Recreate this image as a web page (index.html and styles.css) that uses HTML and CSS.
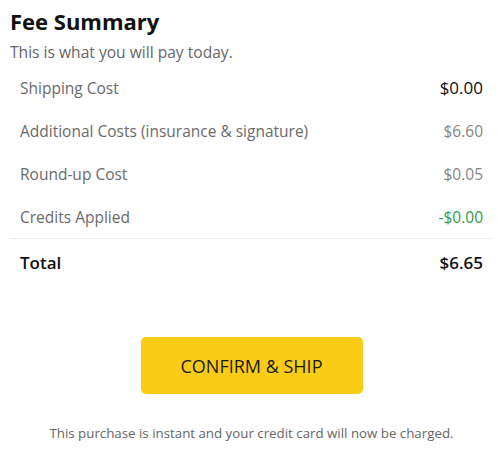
FILE: index.html
```html
<!DOCTYPE html>
<html>
<head>
<meta charset="utf-8">
<link rel="stylesheet" href="styles.css">
</head>
<body>
<div class="summary">
  <h1 class="title">Fee Summary</h1>
  <p class="subtitle">This is what you will pay today.</p>
  <div class="rows">
    <div class="row"><span class="label">Shipping Cost</span><span class="value strong">$0.00</span></div>
    <div class="row"><span class="label">Additional Costs (insurance &amp; signature)</span><span class="value">$6.60</span></div>
    <div class="row"><span class="label">Round-up Cost</span><span class="value">$0.05</span></div>
    <div class="row"><span class="label">Credits Applied</span><span class="value credit">-$0.00</span></div>
  </div>
  <div class="row total"><span class="label">Total</span><span class="value">$6.65</span></div>
  <div class="actions">
    <button class="confirm">CONFIRM &amp; SHIP</button>
    <p class="note">This purchase is instant and your credit card will now be charged.</p>
  </div>
</div>
</body>
</html>
```
FILE: styles.css
```css
html, body { margin: 0; padding: 0; background: #fff; }
body { font-family: "Open Sans", "Noto Sans", sans-serif; color: #222; }
.summary { padding: 6px 5px 0 10px; }
.title { margin: 0; font-size: 22px; font-weight: 700; color: #111; line-height: 30px; }
.subtitle { margin: 6px 0 0; font-size: 15.6px; color: #666; line-height: 20px; }
.rows { border-bottom: 1px solid #ececec; }
.row { display: flex; justify-content: space-between; align-items: center; padding: 0 10px; height: 43px; }
.rows .row:first-child { margin-top: 4px; }
.label { font-size: 15.5px; color: #6a6a6a; }
.value { font-size: 15.5px; color: #858585; }
.value.strong { color: #111; font-size: 17px; }
.value.credit { color: #2e9a4e; }
.total { height: 46px; }
.total .label, .total .value { color: #111; font-weight: 600; font-size: 17px; }
.actions { display: flex; flex-direction: column; align-items: center; margin-top: 52px; }
.confirm { width: 222px; height: 57px; background: #facc15; border: none; border-radius: 5px; font-family: inherit; font-size: 18px; color: #1a1a1a; cursor: pointer; }
.note { margin: 30px 0 0; font-size: 13.3px; line-height: 18px; color: #666; }
```
